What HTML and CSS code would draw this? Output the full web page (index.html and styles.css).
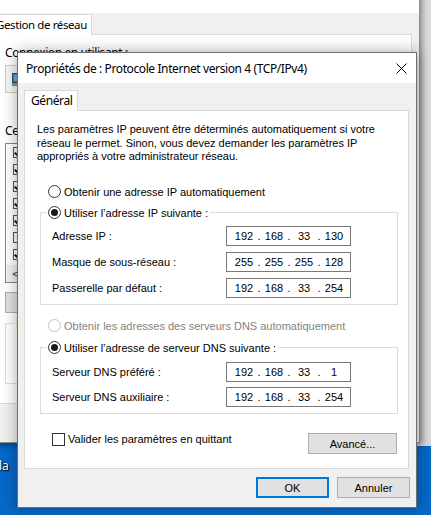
FILE: index.html
```html
<!DOCTYPE html>
<html lang="fr">
<head>
<meta charset="utf-8">
<title>Propriétés de : Protocole Internet version 4 (TCP/IPv4)</title>
<link rel="stylesheet" href="styles.css">
</head>
<body>
<div class="desktop">
  <div class="far-window"></div>
  <div class="desk-label">la</div>

  <div class="back-window">
    <div class="back-title"></div>
    <div class="back-body">
      <div class="back-tabs"><div class="back-tab">Gestion de réseau</div></div>
      <div class="back-panel">
        <div class="back-text first">Connexion en utilisant :</div>
        <div class="adapter">
          <svg class="adapter-icon" width="16" height="14" viewBox="0 0 16 14">
            <rect x="0.5" y="0.5" width="12" height="9" fill="#2f7fd6" stroke="#3a4a5a"/>
            <rect x="2" y="2" width="9" height="6" fill="#5fb0f0"/>
            <rect x="0" y="10" width="14" height="2" fill="#8a9a8a"/>
            <rect x="0" y="12" width="14" height="1" fill="#4caf50"/>
          </svg>
        </div>
        <div class="back-text items-label">Cette connexion utilise les éléments suivants :</div>
        <div class="listbox">
          <div class="li"><span class="cb on"></span></div>
          <div class="li"><span class="cb on"></span></div>
          <div class="li"><span class="cb on"></span></div>
          <div class="li"><span class="cb on"></span></div>
          <div class="li"><span class="cb on"></span></div>
          <div class="li"><span class="cb"></span></div>
          <div class="li"><span class="cb on"></span></div>
          <div class="hscroll"><span class="arrow">&lt;</span></div>
        </div>
        <div class="back-buttons"><div class="back-btn"></div></div>
        <div class="desc-group"><span class="desc-legend">Description</span></div>
      </div>
    </div>
  </div>

  <div class="dialog">
    <div class="titlebar">
      <span class="title">Propriétés de : Protocole Internet version 4 (TCP/IPv4)</span>
      <svg class="close" width="11" height="11" viewBox="0 0 11 11">
        <path d="M0.5 0.5 L10.5 10.5 M10.5 0.5 L0.5 10.5" stroke="#000" stroke-width="1"/>
      </svg>
    </div>
    <div class="tabs"><div class="tab">Général</div></div>
    <div class="panel">
      <p class="intro">Les paramètres IP peuvent être déterminés automatiquement si votre<br>réseau le permet. Sinon, vous devez demander les paramètres IP<br>appropriés à votre administrateur réseau.</p>

      <div class="radio-row first"><span class="radio"></span><span>Obtenir une adresse IP automatiquement</span></div>
      <div class="group g1">
        <div class="group-head"><span class="radio checked"></span><span>Utiliser l’adresse IP suivante :</span></div>
        <div class="rows r1">
          <div class="field"><span class="label">Adresse IP :</span>
            <div class="ip"><span class="oct">192</span><span class="dot">.</span><span class="oct">168</span><span class="dot">.</span><span class="oct">33</span><span class="dot">.</span><span class="oct">130</span></div></div>
          <div class="field"><span class="label">Masque de sous-réseau :</span>
            <div class="ip"><span class="oct">255</span><span class="dot">.</span><span class="oct">255</span><span class="dot">.</span><span class="oct">255</span><span class="dot">.</span><span class="oct">128</span></div></div>
          <div class="field"><span class="label">Passerelle par défaut :</span>
            <div class="ip"><span class="oct">192</span><span class="dot">.</span><span class="oct">168</span><span class="dot">.</span><span class="oct">33</span><span class="dot">.</span><span class="oct">254</span></div></div>
        </div>
      </div>

      <div class="radio-row second disabled"><span class="radio"></span><span>Obtenir les adresses des serveurs DNS automatiquement</span></div>
      <div class="group g2">
        <div class="group-head"><span class="radio checked"></span><span>Utiliser l’adresse de serveur DNS suivante :</span></div>
        <div class="rows r2">
          <div class="field"><span class="label">Serveur DNS préféré :</span>
            <div class="ip"><span class="oct">192</span><span class="dot">.</span><span class="oct">168</span><span class="dot">.</span><span class="oct">33</span><span class="dot">.</span><span class="oct">1</span></div></div>
          <div class="field"><span class="label">Serveur DNS auxiliaire :</span>
            <div class="ip"><span class="oct">192</span><span class="dot">.</span><span class="oct">168</span><span class="dot">.</span><span class="oct">33</span><span class="dot">.</span><span class="oct">254</span></div></div>
        </div>
      </div>

      <div class="bottom-row">
        <span class="check"></span><span class="check-label">Valider les paramètres en quittant</span>
        <div class="btn advanced">Avancé...</div>
      </div>
    </div>
    <div class="buttons">
      <div class="btn ok">OK</div>
      <div class="btn">Annuler</div>
    </div>
  </div>
</div>
</body>
</html>
```

FILE: styles.css
```css
* { box-sizing: border-box; }
html, body { margin: 0; padding: 0; }
body {
  width: 431px;
  height: 515px;
  overflow: hidden;
  font-family: "Liberation Sans", Arial, sans-serif;
  font-size: 11px;
  color: #000;
}
.desktop {
  position: relative;
  width: 431px;
  height: 515px;
  overflow: hidden;
  background: #0668c8;
}

/* window far behind on the right */
.far-window {
  position: absolute;
  left: 400px;
  top: 0;
  width: 60px;
  height: 446px;
  background: #dcdcdc;
}

.desk-label {
  position: absolute;
  left: -1px;
  top: 457px;
  font-family: "Noto Sans", sans-serif;
  font-size: 12px;
  color: #fff;
  text-shadow: 1px 1px 1px #000, 0 0 2px #000;
}

/* back window: Ethernet properties */
.back-window {
  position: absolute;
  left: -19px;
  top: -20px;
  width: 439px;
  height: 463px;
  background: #f0f0f0;
  border: 1px solid #8e8e8e;
  box-shadow: 1px 1px 7px rgba(0, 0, 0, 0.5);
  display: flex;
  flex-direction: column;
  font-family: "Noto Sans", sans-serif;
  font-size: 12px;
  letter-spacing: -0.4px;
}
.back-title {
  height: 32px;
  background: #fff;
  flex: none;
}
.back-body {
  padding: 0 7px 0 6px;
  display: flex;
  flex-direction: column;
}
.back-tabs {
  display: flex;
  margin-top: 1px;
  position: relative;
  z-index: 1;
  margin-bottom: -1px;
}
.back-tab {
  height: 21px;
  width: 104px;
  padding-left: 7px;
  background: #fff;
  border: 1px solid #d9d9d9;
  border-bottom: none;
  line-height: 19px;
  font-size: 11.5px;
  white-space: nowrap;
}
.back-panel {
  height: 370px;
  background: #fff;
  border: 1px solid #d9d9d9;
  padding-left: 16px;
  display: flex;
  flex-direction: column;
  align-items: flex-start;
}
.back-text {
  line-height: 13px;
  height: 13px;
  white-space: nowrap;
}
.back-text.first { margin-top: 11px; }
.adapter {
  margin-top: 6px;
  width: 380px;
  height: 28px;
  background: #f7f7f7;
  border: 1px solid #cdcdcd;
  display: flex;
  align-items: center;
  padding-left: 6px;
}
.adapter-icon { flex: none; margin-top: 2px; }
.back-text.items-label { margin-top: 31px; }
.listbox {
  margin-top: 6px;
  width: 380px;
  height: 140px;
  border: 1px solid #828790;
  background: #fff;
  display: flex;
  flex-direction: column;
}
.li {
  height: 17px;
  display: flex;
  align-items: center;
  padding-left: 7px;
}
.cb {
  width: 11px;
  height: 11px;
  border: 1px solid #555;
  background: #fff;
  position: relative;
  flex: none;
}
.cb.on::after {
  content: "";
  position: absolute;
  left: 2px;
  top: 0px;
  width: 3px;
  height: 6px;
  border-right: 2px solid #111;
  border-bottom: 2px solid #111;
  transform: rotate(40deg);
}
.hscroll {
  margin-top: auto;
  height: 17px;
  background: #f0f0f0;
  display: flex;
  align-items: center;
  padding-left: 6px;
  color: #606060;
  font-size: 11px;
  font-weight: bold;
}
.back-buttons { margin-top: 9px; display: flex; }
.back-btn {
  width: 75px;
  height: 21px;
  background: #e1e1e1;
  border: 1px solid #adadad;
}
.desc-group {
  margin-top: 10px;
  width: 380px;
  height: 61px;
  border: 1px solid #dcdcdc;
}
.desc-legend {
  display: inline-block;
  margin: -8px 0 0 9px;
  background: #fff;
  line-height: 14px;
  padding: 0 1px;
  vertical-align: top;
}

/* foreground dialog */
.dialog {
  position: absolute;
  left: 17px;
  top: 52px;
  width: 400px;
  height: 456px;
  background: #f0f0f0;
  border: 1px solid #6e6e6e;
  box-shadow: 0 0 14px rgba(0, 0, 0, 0.35);
  display: flex;
  flex-direction: column;
}
.titlebar {
  height: 30px;
  background: #fff;
  display: flex;
  align-items: center;
  padding-left: 8px;
  flex: none;
}
.title {
  font-family: "Noto Sans", sans-serif;
  font-size: 12px;
  letter-spacing: -0.4px;
  white-space: nowrap;
}
.close { margin-left: auto; margin-right: 9px; }
.tabs {
  padding: 7px 0 0 6px;
  display: flex;
  position: relative;
  z-index: 1;
  margin-bottom: -1px;
}
.tab {
  height: 21px;
  width: 54px;
  background: #fff;
  border: 1px solid #d9d9d9;
  border-bottom: none;
  font-family: "Noto Sans", sans-serif;
  font-size: 12px;
  letter-spacing: -0.4px;
  line-height: 19px;
  padding-left: 6px;
}
.panel {
  margin: 0 7px 0 6px;
  height: 359px;
  background: #fff;
  border: 1px solid #d9d9d9;
  display: flex;
  flex-direction: column;
  flex: none;
}
.intro {
  margin: 0;
  padding: 12px 0 0 12px;
  line-height: 13.5px;
  white-space: nowrap;
}
.radio-row {
  display: flex;
  align-items: center;
  height: 13px;
  gap: 3px;
  margin-left: 23px;
  white-space: nowrap;
}
.radio-row.first { margin-top: 21.5px; }
.radio-row.second { margin-top: 14px; }
.radio-row.disabled { color: #838383; }
.radio {
  width: 13px;
  height: 13px;
  border-radius: 50%;
  border: 1px solid #333;
  background: #fff;
  position: relative;
  flex: none;
}
.radio-row.disabled .radio { border-color: #c2c2c2; }
.radio.checked::after {
  content: "";
  position: absolute;
  left: 2px;
  top: 2px;
  width: 7px;
  height: 7px;
  border-radius: 50%;
  background: #1a1a1a;
}
.group {
  margin: 14px 10px 0 15px;
  border: 1px solid #dcdcdc;
  display: flex;
  flex-direction: column;
}
.g2 { margin-top: 15px; }
.group-head {
  align-self: flex-start;
  margin: -7px 0 0 6px;
  height: 13px;
  display: flex;
  align-items: center;
  gap: 3px;
  background: #fff;
  padding: 0 2px 0 1px;
  white-space: nowrap;
}
.rows {
  display: flex;
  flex-direction: column;
  padding: 7px 0 6px 11px;
  gap: 6px;
}
.rows.r2 { padding-top: 8px; gap: 5px; }
.field {
  display: flex;
  align-items: center;
  height: 20px;
}
.label { width: 174px; flex: none; }
.ip {
  width: 125px;
  height: 20px;
  border: 1px solid #7a7a7a;
  display: flex;
  align-items: center;
  padding-left: 5px;
  background: #fff;
}
.oct { width: 24px; text-align: center; }
.dot { width: 6px; text-align: center; }
.bottom-row {
  margin: 19px 11px 0 27px;
  display: flex;
  align-items: flex-start;
}
.check {
  width: 13px;
  height: 13px;
  border: 1px solid #333;
  background: #fff;
  flex: none;
}
.check-label { margin-left: 3px; line-height: 13px; white-space: nowrap; }
.btn {
  width: 73px;
  height: 21px;
  background: #e1e1e1;
  border: 1px solid #adadad;
  display: flex;
  align-items: center;
  justify-content: center;
}
.btn.advanced { margin-left: auto; width: 89px; }
.btn.ok { border: 2px solid #0078d7; }
.buttons {
  display: flex;
  justify-content: flex-end;
  gap: 8px;
  padding: 8px 6px 0 0;
}
```
